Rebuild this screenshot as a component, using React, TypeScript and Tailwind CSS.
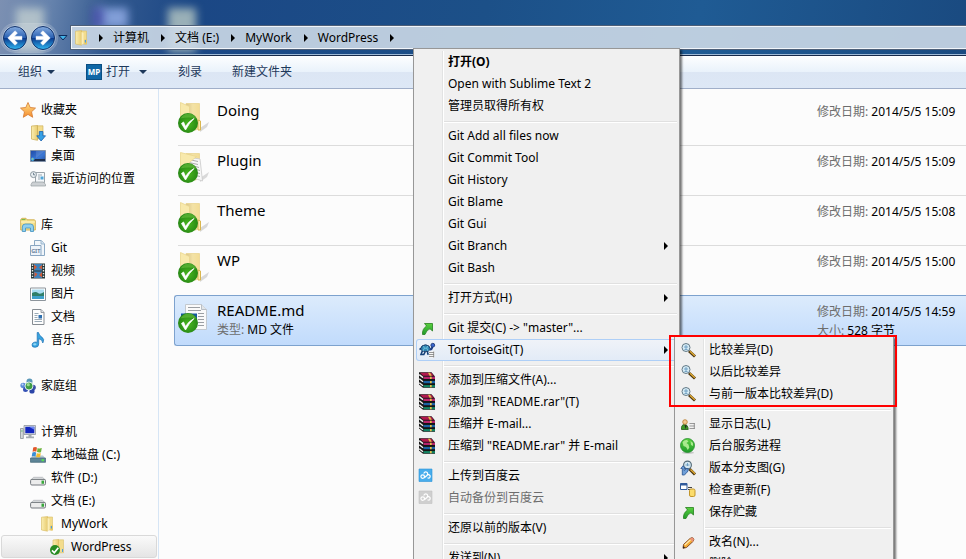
import React from "react";

type IconProps = { name: string };

const svg16 = "block size-4 shrink-0 overflow-visible";

function Icon({ name }: IconProps) {
  switch (name) {
    case "star":
      return (
        <svg className={svg16} viewBox="0 0 16 16">
          <path d="M8 .5l2.200 5 5.300.6-4 3.700 1.200 5.500L8 12.400l-4.700 2.900 1.200-5.500-4-3.700 5.300-.6z" fill="url(#gStar)" stroke="#d9813a" strokeWidth=".9" strokeLinejoin="round" />
        </svg>
      );
    case "folder":
      return (
        <svg className={svg16} viewBox="0 0 16 16">
          <path d="M7 1h5.500v13H7z" fill="#f3dc8c" stroke="#d9bf69" strokeWidth=".6" />
          <path d="M1.500 1.200L7.500.6v14.600l-6-1.200z" fill="url(#gFold)" stroke="#d6b95d" strokeWidth=".6" />
          <path d="M7.500 2v13l2-1.500V3z" fill="#fbeeb8" />
          <path d="M10.500 9.500h2.300v5h-2.300z" fill="#eac75f" />
          <path d="M11.400 10v2.500" stroke="#4b9ee0" strokeWidth="1.200" />
        </svg>
      );
    case "download":
      return (
        <svg className={svg16} viewBox="0 0 16 16">
          <path d="M7 .8h6v13H7z" fill="#f3dc8c" stroke="#c9ab52" strokeWidth=".6" />
          <path d="M1.500 1L7.500.5v14.800l-6-1.200z" fill="url(#gFold)" stroke="#c9ab52" strokeWidth=".7" />
          <path d="M9.300 6.500h3.600v4.300h2.600L11.100 16 6.700 10.800h2.600z" fill="#36a1e6" stroke="#1b62b0" strokeWidth=".8" />
        </svg>
      );
    case "desktop":
      return (
        <svg className={svg16} viewBox="0 0 16 16">
          <path d="M.5 2.500h15v11H.5z" fill="url(#gDesk)" stroke="#8292a8" />
          <path d="M1 11h14v2H1z" fill="#1d2d4a" />
          <circle cx="2.600" cy="11.300" r="1.800" fill="#3fa8e6" />
          <path d="M2 10.500h1v1H2z" fill="#f4c83c" />
          <path d="M6 3h9L6 10z" fill="#fff" opacity=".12" />
        </svg>
      );
    case "recent":
      return (
        <svg className={svg16} viewBox="0 0 16 16">
          <path d="M5.500 1.500h9v10h-9z" fill="#f5f8fa" stroke="#9aa3a9" />
          <path d="M8 4h4M8 6h2M8 8h2" stroke="#9aa8b2" />
          <path d="M10.500 5.500h3v3h-3z" fill="#4fa5d8" />
          <path d="M2.500 11h11l2 2.500v1.500H1v-1.500z" fill="#cdd1d4" stroke="#979da1" strokeWidth=".7" />
          <circle cx="3.500" cy="3.600" r="3" fill="#e8eef1" stroke="#8b979f" />
          <path d="M3.500 1.800v2h1.700" stroke="#5a6f7d" fill="none" strokeWidth=".8" />
        </svg>
      );
    case "library":
      return (
        <svg className={svg16} viewBox="0 0 16 16">
          <path d="M.7 13V2.500L2 1.300h4l1 1.500h7.500l.8 1V13z" fill="#f6e28d" stroke="#cfad4c" strokeWidth=".9" />
          <path d="M1.500 2.600h4" stroke="#6fb549" />
          <path d="M1 5h14" stroke="#fff6c6" />
          <path d="M2.300 14.500V10q0-3 3-3h5.200q3 0 3 3v4.500h-3v-3.500h-5v3.500z" fill="#8fcfee" stroke="#4090bf" strokeWidth=".8" />
        </svg>
      );
    case "git":
      return (
        <svg className={svg16} viewBox="0 0 16 16">
          <path d="M4.500.5h6.800L14.500 4v11.500h-10z" fill="#f1f6fb" stroke="#8ba9c4" />
          <path d="M11 .7V4h3.400" fill="#d5e4f1" stroke="#8ba9c4" strokeWidth=".8" />
          <path d="M.5 5.500h10.500v10H.5z" fill="#eef4fa" stroke="#8aa6c2" />
          <text x="5.800" y="13" textAnchor="middle" fontSize="5.500" fontWeight="700" fill="#6b839e" fontFamily="Noto Sans, sans-serif">GIT</text>
        </svg>
      );
    case "video":
      return (
        <svg className={svg16} viewBox="0 0 16 16">
          <path d="M1 .5h14v15H1z" fill="#293838" />
          <path d="M4 1h8v6.500H4zM4 8.500h8V15H4z" fill="#3c83bd" />
          <path d="M4 1.500l3 2.500-3 3zM12 2L9 4.500l3 2zM4.500 9l3 2-3 3.500zM12 9l-3 3 3 2.500z" fill="#cf5b38" />
          <path d="M2.500 1.500v13M13.500 1.500v13" stroke="#e4ecec" strokeWidth="1.400" strokeDasharray="1.400 1.400" />
        </svg>
      );
    case "picture":
      return (
        <svg className={svg16} viewBox="0 0 16 16">
          <path d="M.5 2h15v12.500H.5z" fill="#fff" stroke="#8d959c" />
          <path d="M2 3.500h12V13H2z" fill="#a9dcf2" />
          <path d="M2 7q4-2 6 0t6-1v4H2z" fill="#2f7f6a" />
          <path d="M2 10h12v3H2z" fill="#3ea0cb" />
        </svg>
      );
    case "doc":
      return (
        <svg className={svg16} viewBox="0 0 16 16">
          <path d="M2.500.500H11L14 3.500v12H2.500z" fill="#fdfdfd" stroke="#868c92" />
          <path d="M11 .5v3h3" fill="#dfe4e8" stroke="#868c92" strokeWidth=".8" />
          <path d="M4.500 4.500h4M4.500 6.500h3M4.500 8.500h3M4.500 10.500h7.500M4.500 12.500h7.500" stroke="#8fa0ae" strokeWidth=".9" />
          <path d="M8.500 6h3.500v3.500H8.500z" fill="#2e6fae" />
        </svg>
      );
    case "music":
      return (
        <svg className={svg16} viewBox="0 0 16 16">
          <path d="M7.200.5h1.300q.5 3 3.300 4.500 3.200 2.200 1 6-.2-3.500-4.100-4.300V12q0 3.300-3.500 3.300T2 12.900t2.500-2.700q1.500-.4 2.700.2z" fill="#38a4df" stroke="#1c70b4" strokeWidth=".7" />
          <ellipse cx="4.800" cy="12.300" rx="1.700" ry="1.100" fill="#8fd6f5" />
        </svg>
      );
    case "homegroup":
      return (
        <svg className={svg16} viewBox="0 0 16 16">
          <circle cx="3.200" cy="7.500" r="2.800" fill="#5d8bd8" />
          <circle cx="9.500" cy="3.500" r="3" fill="#5b98b8" />
          <circle cx="13" cy="9.500" r="2.800" fill="#3c4fa5" />
          <circle cx="12" cy="13" r="2.600" fill="#2c46a8" />
          <circle cx="5.500" cy="11.500" r="2.500" fill="#3552b5" />
          <circle cx="9" cy="8" r="4" fill="#3f9d45" stroke="#e9f3f8" strokeWidth=".9" />
          <circle cx="8.300" cy="6.700" r="1.600" fill="#9ad98f" />
          <circle cx="2.600" cy="6.500" r="1" fill="#c3d9f7" />
        </svg>
      );
    case "computer":
      return (
        <svg className={svg16} viewBox="0 0 16 16">
          <path d="M.5 4.500h2.800v10H.5z" fill="#d3d8db" stroke="#899197" strokeWidth=".8" />
          <path d="M1.300 7h1.200" stroke="#35b54a" />
          <path d="M4 1.500h11.500v9H4z" fill="#d9dde2" stroke="#8f979e" strokeWidth=".8" />
          <path d="M5.300 2.800h9v6.400h-9z" fill="#1226c0" />
          <path d="M9 2.800h5.300v3z" fill="#6d86f0" />
          <path d="M8.500 10.500h3v2h2.500v1.700H6v-1.700h2.500z" fill="#a4abb1" />
        </svg>
      );
    case "drive-win":
      return (
        <svg className={svg16} viewBox="0 0 16 16">
          <path d="M.5 11.500L3 8.500h10l2.500 3z" fill="#b5c7d2" />
          <path d="M.5 11h15v4.300H.5z" fill="#5d8597" stroke="#426675" strokeWidth=".7" />
          <path d="M11.500 12.200h2.500v2h-2.500z" fill="#57df4f" />
          <path d="M3.200.6q2-1.200 3.800 0L6.300 4.800q-1.800-1-3.700 0z" fill="#e2582b" />
          <path d="M7.600 1q2 1 4.200.1L11 5.200q-2 .8-4 -.1z" fill="#6db33c" />
          <path d="M2.400 5.500q2-1 3.800 0L5.500 9.500q-2-.8-3.800 0z" fill="#3a8ed5" />
          <path d="M6.800 5.900q1.800 1 4 0l-.7 4q-2 .8-4 0z" fill="#f3bb2e" />
        </svg>
      );
    case "drive":
      return (
        <svg className={svg16} viewBox="0 0 16 16">
          <path d="M.8 10L3.500 7.300h9L15.300 10z" fill="#dfe1e3" stroke="#abafb3" strokeWidth=".7" />
          <rect x=".6" y="9.400" width="14.900" height="5.600" rx="1.300" fill="#ececec" stroke="#74797e" />
          <path d="M11.500 10.600H14v3.200h-2.500z" fill="#39a83b" />
        </svg>
      );
    case "folder-ok":
      return (
        <svg className={svg16} viewBox="0 0 16 16">
          <path d="M8 .8h5.500v13H8z" fill="#f3dc8c" stroke="#d9bf69" strokeWidth=".6" />
          <path d="M3 1L8.500.5V15L3 13.800z" fill="url(#gFold)" stroke="#d6b95d" strokeWidth=".6" />
          <path d="M12.500 10v3" stroke="#4b9ee0" />
          <circle cx="5" cy="11" r="5" fill="#278b22" />
          <path d="M2 11.300l2.300 2.500 4-5" stroke="#fff" strokeWidth="1.700" fill="none" />
        </svg>
      );
    case "arrow":
      return (
        <svg className={svg16} viewBox="0 0 16 16">
          <path d="M5.500 3.500H13.500V11L11 8.800Q7.800 9.500 6 14.500H3.500Q3 9 7.600 6z" fill="url(#gGreen)" stroke="#26801d" strokeWidth=".8" strokeLinejoin="round" />
        </svg>
      );
    case "turtle":
      return (
        <svg className={svg16} viewBox="0 0 16 16">
          <path d="M2.200 6.500L.5 7.500M3.500 8.500L2 12.500h2.800l1.500-3M8.500 9l.3 3h1.700" stroke="#16427a" strokeWidth="1.600" fill="none" />
          <path d="M1.500 7q.5-4 5-4.200 4.200.2 5 4.200-1.500 2.600-5 2.600T1.500 7z" fill="#2f86b4" stroke="#15305c" strokeWidth=".9" />
          <path d="M4.500 3.800l.8 2.400h2.500l.8-2.400M5.300 6.200L4 9M7.800 6.200L9 9" stroke="#7fd0e4" strokeWidth=".8" fill="none" />
          <path d="M11 7.500q2 .2 2.300-3" stroke="#1d3f86" strokeWidth="2" fill="none" />
          <circle cx="13.800" cy="3.200" r="1.900" fill="#3a66cf" stroke="#17316c" strokeWidth=".8" />
          <path d="M9.800 9.300h5.700v6.500H9.800z" fill="#f6f6f6" />
          <path d="M10 10.500h5M10 12.500h5M10 14.500h5M14.700 9.500v6" stroke="#7d7d7d" strokeWidth=".8" />
        </svg>
      );
    case "rar":
      return (
        <svg className={svg16} viewBox="0 0 16 16">
          <path d="M0 .2h12.500L16 4.500v11.300H4L0 12.500z" fill="#141414" />
          <path d="M1 .7h11.300l2.500 3H4z" fill="#b3184e" />
          <path d="M4.500 4.700H16V7H4.500z" fill="#b8246c" />
          <path d="M4.500 8.900H16v2.300H4.500z" fill="#1b62a4" />
          <path d="M4.500 13.100H16v2.100H4.500z" fill="#128463" />
          <path d="M.3 2.600l3.700 3M.3 6.700l3.700 3M.3 10.800l3.700 3" stroke="#f2f2f2" strokeWidth="1.400" />
          <path d="M9 .7h2l1.800 3h-2.200zM11 4.700h1.700V7H11zM11 8.900h1.700v2.300H11zM11 13.100h1.700v2.100H11z" fill="#e3c04a" />
        </svg>
      );
    case "cloud":
    case "cloud-off": {
      const off = name === "cloud-off";
      return (
        <svg className={svg16} viewBox="0 0 16 16">
          <path d="M0 1h13v12.500H0z" fill={off ? "#cfcfcf" : "#48adec"} stroke={off ? "#c2c2c2" : "#2b93d8"} strokeWidth=".6" />
          <circle cx="3.700" cy="8.600" r="1.800" fill="none" stroke="#fff" strokeWidth="1.200" />
          <path d="M4.700 5.500q1.200-2.200 3.200-1.200 1.600 1.400 0 3.200L5.300 9.800M8.500 9.800q1.700.8 2.500-.6t-.8-2.400q-1.200-.4-1.800.4" fill="none" stroke="#fff" strokeWidth="1.200" />
        </svg>
      );
    }
    case "lens":
      return (
        <svg className={svg16} viewBox="0 0 16 16">
          <path d="M9 9l6 5.500" stroke="#4a3510" strokeWidth="3" />
          <path d="M10 9.300l4.800 4.400" stroke="#e2ab32" strokeWidth="1.500" />
          <circle cx="6" cy="5.500" r="4" fill="#d6ecf6" stroke="#647a87" />
          <path d="M4 5h4M6 3v4M4.500 7.500h3" stroke="#5e93ba" strokeWidth=".8" />
        </svg>
      );
    case "log":
      return (
        <svg className={svg16} viewBox="0 0 16 16">
          <path d="M1.500 13.500q-.5-5 3-5t3.700 5z" fill="#3c9a28" stroke="#23591a" strokeWidth=".8" />
          <path d="M4.500 9l1.200 4 1-3.500z" fill="#222" />
          <circle cx="5" cy="6" r="2.300" fill="#f2c893" stroke="#b97c2c" strokeWidth=".8" />
          <path d="M9.500 7.500h5M9.500 10h5M9.500 12.500h5" stroke="#999" />
          <path d="M14.300 7v6" stroke="#777" strokeWidth=".8" />
        </svg>
      );
    case "globe":
      return (
        <svg className={svg16} viewBox="0 0 16 16">
          <ellipse cx="8" cy="14.700" rx="6" ry="1.300" fill="#aaa" opacity=".6" />
          <circle cx="7.500" cy="7.500" r="7" fill="url(#gGreen)" stroke="#238b2c" strokeWidth=".8" />
          <path d="M2.500 4q2-2.500 4.500-2l1.500 1.500L6.500 5l2 1.500.8 3-1.500 2.500-1.800-3-2.500-1zM10.500 3l2.500 2v3l-2-1z" fill="#a9ea8e" />
        </svg>
      );
    case "graph":
      return (
        <svg className={svg16} viewBox="0 0 16 16">
          <path d="M9.500 9l5.500 5.500" stroke="#4a3510" strokeWidth="3" />
          <path d="M10.500 9.500l4.500 4.300" stroke="#e2ab32" strokeWidth="1.500" />
          <circle cx="7.500" cy="5" r="3.900" fill="#d3e6f1" stroke="#526976" strokeWidth="1.100" />
          <path d="M5.500 5h4M7.500 3v3" stroke="#5e93ba" strokeWidth=".8" />
          <path d="M.8 8.500L3 5.800l2.500 2.700H4.200v2l2.300-1.800h1.800L8 11l-2 2.500-1.800 1.500H2.300V8.500z" fill="#6f9fd8" stroke="#27528f" strokeWidth=".8" />
        </svg>
      );
    case "update":
      return (
        <svg className={svg16} viewBox="0 0 16 16">
          <path d="M.5 1.500h6.500v6H.5z" fill="#fff" stroke="#315a9b" />
          <path d="M.5 1.500h6.500v2H.5z" fill="#315a9b" />
          <path d="M8 5.500h4M8 7.500h2" stroke="#444" />
          <rect x="9.500" y="7" width="5.500" height="7.500" rx="1.500" fill="#fbdc6b" stroke="#c2952a" />
        </svg>
      );
    case "pencil":
      return (
        <svg className={svg16} viewBox="0 0 16 16">
          <path d="M3.500 10.500l6.500-6q2-1.500 3.200-.4t0 3.200L6.500 13.500 3 14.300z" fill="#f3ab35" stroke="#7a3f1c" strokeWidth=".9" />
          <path d="M4.800 11l5.700-5.300" stroke="#ffe9ae" strokeWidth="1.300" />
          <path d="M10 4.500q2-1.500 3.200-.4t0 3.200l-1 .8z" fill="#eb937a" />
          <path d="M3 14.300l.4-2.200 1.600 1.600z" fill="#222" />
        </svg>
      );
    case "delete":
      return (
        <svg className={svg16} viewBox="0 0 16 16">
          <path d="M3 4l9 9M12 4l-9 9" stroke="#d33" strokeWidth="2.500" />
        </svg>
      );
    default:
      return <span className="block size-4 shrink-0" />;
  }
}

function Gradients() {
  return (
    <svg className="absolute size-0" aria-hidden="true">
      <defs>
        <linearGradient id="gStar" x1="0" y1="0" x2="0" y2="1">
          <stop offset="0" stopColor="#ffe48a" />
          <stop offset="1" stopColor="#f58a2c" />
        </linearGradient>
        <linearGradient id="gFold" x1="0" y1="0" x2="1" y2="0">
          <stop offset="0" stopColor="#fbeeb0" />
          <stop offset="1" stopColor="#e8cc72" />
        </linearGradient>
        <linearGradient id="gDesk" x1="0" y1="0" x2="1" y2="1">
          <stop offset="0" stopColor="#1d49a8" />
          <stop offset=".6" stopColor="#3c78d4" />
          <stop offset="1" stopColor="#234fa0" />
        </linearGradient>
        <linearGradient id="gGreen" x1="0" y1="0" x2="0" y2="1">
          <stop offset="0" stopColor="#5ad13f" />
          <stop offset="1" stopColor="#1f9a2a" />
        </linearGradient>
        <radialGradient id="gCheck" cx=".5" cy=".55" r=".6">
          <stop offset="0" stopColor="#4cb81f" />
          <stop offset="1" stopColor="#1f7f14" />
        </radialGradient>
        <linearGradient id="gNav" x1="0" y1="0" x2="0" y2="1">
          <stop offset="0" stopColor="#86acdf" />
          <stop offset=".48" stopColor="#2b62b4" />
          <stop offset=".52" stopColor="#0c3c90" />
          <stop offset="1" stopColor="#2fb8f2" />
        </linearGradient>
        <linearGradient id="gBig" x1="0" y1="0" x2="1" y2="0">
          <stop offset="0" stopColor="#d9c48a" />
          <stop offset=".5" stopColor="#f3e2a6" />
          <stop offset="1" stopColor="#f3dc94" />
        </linearGradient>
      </defs>
    </svg>
  );
}

function FileIcon({ kind }: { kind: string }) {
  return (
    <svg className="block size-8 shrink-0 overflow-visible" viewBox="0 0 32 32">
      {kind === "md" ? (
        <>
          <path d="M7.500 2.500h16l5 5v20h-21z" fill="#fafafa" stroke="#c3c9cf" />
          <path d="M23.500 2.500v5h5" fill="#e1e5e9" stroke="#b8bfc6" />
          <path d="M10 5.500h12M10 8.500h13M20 11.500h6M20 14.500h6M20 17.500h6M20 20.500h6M20 23.500h6" stroke="#9b9fa4" strokeWidth="1.200" />
          <path d="M3 11.500h16v12H3z" fill="#14599c" />
        </>
      ) : (
        <>
          <path d="M22 26l9-6-2 5-7 5z" fill="#999" opacity=".35" />
          <path d="M8 1.500h13.500V25L18 28H8z" fill="url(#gBig)" stroke="#ead692" strokeWidth=".8" />
          {kind === "docs" && (
            <>
              <path d="M9 5l13 2 2.500 22-9-3z" fill="#f7f7f7" stroke="#c9c9c9" strokeWidth=".8" />
              <path d="M11 7.500l9 2M11 10.500l9 2M14 13.500l7 2M18 17.500l4 1M18 20.500l4 1M18 23.500l4 1" stroke="#a4a4a4" strokeWidth=".9" />
            </>
          )}
          <path d={kind === "docs" ? "M2.500.5l16 4-7 6v19l-9-4z" : "M2.500.5l9 4v26l-9-4z"} fill="#f8e9ac" stroke="#ead58e" strokeWidth=".8" />
          {kind === "folder" && <path d="M20 18l2.500 1v9H20z" fill="#fbedb2" stroke="#d9b64f" />}
        </>
      )}
      <circle cx="10" cy="21" r="10" fill="url(#gCheck)" />
      <path d="M2.500 16.500q3-5 8-5t8 5q-8-2-16 0z" fill="#7fd04c" opacity=".45" />
      <path d="M3.500 21.500l4 6.500Q11 21 16 16.500q-5 2.500-8.500 8L5.500 20z" fill="#fff" stroke="#fff" strokeWidth=".8" />
    </svg>
  );
}

function NavButton({ label, flip }: { label: string; flip?: boolean }) {
  return (
    <button type="button" aria-label={label} className="block size-7">
      <svg className="size-7" viewBox="0 0 28 28">
        <circle cx="14" cy="14" r="12.500" fill="#d4e2f2" opacity=".75" />
        <circle cx="14" cy="14" r="11.500" fill="url(#gNav)" stroke="#12326b" />
        <path
          d={flip ? "M7 12.200h7.500l-3-3.200 2.500-2.300 7.300 7.300-7.300 7.300-2.500-2.300 3-3.200H7z" : "M21 12.200h-7.500l3-3.200L14 6.700 6.700 14l7.300 7.300 2.500-2.300-3-3.200H21z"}
          fill="#fff"
          stroke="#e8f0fa"
          strokeWidth=".4"
        />
      </svg>
    </button>
  );
}

function RightTri({ className }: { className: string }) {
  return (
    <svg className={className} viewBox="0 0 4 8">
      <path d="M0 0l4 4-4 4z" fill="currentColor" />
    </svg>
  );
}

function DownTri() {
  return (
    <svg className="h-1 w-2" viewBox="0 0 8 4">
      <path d="M0 0h8L4 4z" fill="#1e395b" />
    </svg>
  );
}

const crumbs = ["计算机", "文档 (E:)", "MyWork", "WordPress"];

function TitleBar() {
  return (
    <header className="relative h-14 shrink-0 overflow-hidden border-b border-[#16294a] bg-[linear-gradient(100deg,#7c90b2_0,#6683ad_50px,#33598f_110px,#1b4785_190px,#1c5088_50%,#1f5b94_72%,#1a4a80_100%)] shadow-[inset_0_-1px_0_#9db9d6]">
      <span className="absolute top-2 left-4 h-11 w-7 bg-[#cdd8d4]/70 blur-[4px]" />
      <span className="absolute top-2 left-24 h-5 w-8 bg-[#8ba6e0]/90 blur-[4px]" />
      <span className="absolute top-2 left-[92px] h-5 w-3 bg-[#3b3fa0]/70 blur-[4px]" />
      <span className="absolute top-2 left-[168px] h-11 w-7 bg-[#b9cbc4]/80 blur-[4px]" />
      <nav className="relative flex items-start pt-6" aria-label="地址">
        <div className="flex w-[71px] shrink-0 items-center pl-px">
          <div className="flex rounded-full bg-white/15 shadow-[0_0_0_1px_#ffffff30]">
            <NavButton label="后退" />
            <NavButton label="前进" flip />
          </div>
          <button type="button" aria-label="最近的位置" className="ml-px">
            <svg className="h-[6px] w-[10px]" viewBox="0 0 10 6">
              <path d="M1 .5h8L5 5z" fill="#43b2e8" stroke="#0d2c5c" />
            </svg>
          </button>
        </div>
        <ol className="mt-[2px] flex h-[23px] flex-1 items-center border border-r-0 border-[#f1f5fa] bg-[#ccd9e7]/90 pl-[2px] text-[12px] shadow-[0_0_0_1px_#4d5f78]">
          <li className="mr-[9px]"><Icon name="folder" /></li>
          {crumbs.map((c) => (
            <li key={c} className="flex items-center">
              <RightTri className="mr-[10px] h-2 w-1 text-black" />
              <button type="button" className="mr-3 leading-5 whitespace-nowrap">{c}</button>
            </li>
          ))}
          <li><RightTri className="h-2 w-1 text-black" /></li>
        </ol>
      </nav>
    </header>
  );
}

function Toolbar() {
  return (
    <div className="flex h-[33px] shrink-0 items-center border-b border-[#a0afc9] bg-[linear-gradient(#fdfeff,#e9f2fb_50%,#dce6f4_50%,#dde8f6)] pl-[18px] text-[12px] text-[#1e395b]">
      <button type="button" className="flex items-center gap-[5px]">组织 <DownTri /></button>
      <button type="button" className="ml-[31px] flex items-center gap-1">
        <span className="flex size-4 items-center justify-center bg-[#0f67a6] text-[8px] font-bold text-white ring-1 ring-[#0b4f83] ring-inset">MP</span>
        打开
      </button>
      <button type="button" aria-label="打开选项" className="ml-[9px] flex"><DownTri /></button>
      <button type="button" className="ml-[31px]">刻录</button>
      <button type="button" className="ml-[30px]">新建文件夹</button>
    </div>
  );
}

type TreeItem = { icon: string; text: string; level: 0 | 1 | 2 | 3; selected?: boolean };

const tree: TreeItem[][] = [
  [
    { icon: "star", text: "收藏夹", level: 0 },
    { icon: "download", text: "下载", level: 1 },
    { icon: "desktop", text: "桌面", level: 1 },
    { icon: "recent", text: "最近访问的位置", level: 1 },
  ],
  [
    { icon: "library", text: "库", level: 0 },
    { icon: "git", text: "Git", level: 1 },
    { icon: "video", text: "视频", level: 1 },
    { icon: "picture", text: "图片", level: 1 },
    { icon: "doc", text: "文档", level: 1 },
    { icon: "music", text: "音乐", level: 1 },
  ],
  [{ icon: "homegroup", text: "家庭组", level: 0 }],
  [
    { icon: "computer", text: "计算机", level: 0 },
    { icon: "drive-win", text: "本地磁盘 (C:)", level: 1 },
    { icon: "drive", text: "软件 (D:)", level: 1 },
    { icon: "drive", text: "文档 (E:)", level: 1 },
    { icon: "folder", text: "MyWork", level: 2 },
    { icon: "folder-ok", text: "WordPress", level: 3, selected: true },
  ],
];

const indent = ["pl-[18px]", "pl-[28px]", "pl-[38px]", "pl-[48px]"];

function Sidebar() {
  return (
    <aside className="flex w-[159px] shrink-0 flex-col gap-[23px] border-r border-[#d6e5f5] pt-[9px] pr-px pl-px">
      {tree.map((group) => (
        <ul key={group[0].text}>
          {group.map((it) => (
            <li key={it.text}>
              <button
                type="button"
                className={`flex h-[23px] w-full items-center gap-[5px] rounded-[3px] border text-left text-[12px] whitespace-nowrap ${indent[it.level]} ${
                  it.selected ? "border-[#d9d9d9] bg-linear-to-b from-[#fafafa] to-[#e5e5e5]" : "border-transparent"
                }`}
              >
                <Icon name={it.icon} />
                {it.text}
              </button>
            </li>
          ))}
        </ul>
      ))}
    </aside>
  );
}

type FileRow = { name: string; kind: string; date: string; type?: string; size?: string };

const files: FileRow[] = [
  { name: "Doing", kind: "folder", date: "2014/5/5 15:09" },
  { name: "Plugin", kind: "docs", date: "2014/5/5 15:09" },
  { name: "Theme", kind: "folder", date: "2014/5/5 15:08" },
  { name: "WP", kind: "folder", date: "2014/5/5 15:00" },
  { name: "README.md", kind: "md", date: "2014/5/5 14:59", type: "MD 文件", size: "528 字节" },
];

function FileList() {
  return (
    <ul className="min-w-0 flex-1 pt-[6px] pl-[15px]">
      {files.map((f, i) => {
        const selected = f.kind === "md";
        return (
          <li
            key={f.name}
            className={
              selected
                ? "h-[51px] rounded-l-[3px] border border-r-0 border-[#7da2ce] bg-linear-to-b from-[#dcebfc] to-[#c1dbfc] pl-[3px]"
                : `ml-1 h-[50px] border-t ${i === 0 ? "border-transparent" : "border-[#dcdcdc]"}`
            }
          >
            <div className="flex pt-1">
              <div className="pt-[2px]"><FileIcon kind={f.kind} /></div>
              <div className="ml-[7px] min-w-0 flex-1">
                <p className="text-[15px] leading-5">{f.name}</p>
                {f.type && <p className="text-[12px] leading-5"><span className="text-[#6d6d6d]">类型:</span> {f.type}</p>}
              </div>
              <div className="w-[149px] shrink-0 pt-[2px] text-[12px] leading-[19px] whitespace-nowrap">
                <p><span className="text-[#6d6d6d]">修改日期:</span> {f.date}</p>
                {f.size && <p><span className="text-[#6d6d6d]">大小:</span> {f.size}</p>}
              </div>
            </div>
          </li>
        );
      })}
    </ul>
  );
}

type MenuEntry = { text: string; icon?: string; sub?: boolean; bold?: boolean; off?: boolean; hot?: boolean };

const mainMenu: MenuEntry[][] = [
  [{ text: "打开(O)", bold: true }, { text: "Open with Sublime Text 2" }, { text: "管理员取得所有权" }],
  [
    { text: "Git Add all files now" },
    { text: "Git Commit Tool" },
    { text: "Git History" },
    { text: "Git Blame" },
    { text: "Git Gui" },
    { text: "Git Branch", sub: true },
    { text: "Git Bash" },
  ],
  [{ text: "打开方式(H)", sub: true }],
  [
    { text: 'Git 提交(C) -> "master"...', icon: "arrow" },
    { text: "TortoiseGit(T)", icon: "turtle", sub: true, hot: true },
  ],
  [
    { text: "添加到压缩文件(A)...", icon: "rar" },
    { text: '添加到 "README.rar"(T)', icon: "rar" },
    { text: "压缩并 E-mail...", icon: "rar" },
    { text: '压缩到 "README.rar" 并 E-mail', icon: "rar" },
  ],
  [
    { text: "上传到百度云", icon: "cloud" },
    { text: "自动备份到百度云", icon: "cloud-off", off: true },
  ],
  [{ text: "还原以前的版本(V)" }],
  [{ text: "发送到(N)", sub: true }],
];

const gitMenu: MenuEntry[][] = [
  [
    { text: "比较差异(D)", icon: "lens" },
    { text: "以后比较差异", icon: "lens" },
    { text: "与前一版本比较差异(D)", icon: "lens" },
  ],
  [
    { text: "显示日志(L)", icon: "log" },
    { text: "后台服务进程", icon: "globe" },
    { text: "版本分支图(G)", icon: "graph" },
    { text: "检查更新(F)", icon: "update" },
    { text: "保存贮藏", icon: "arrow" },
  ],
  [{ text: "改名(N)...", icon: "pencil" }, { text: "删除", icon: "delete" }],
];

function Menu({ groups, label, className }: { groups: MenuEntry[][]; label: string; className: string }) {
  return (
    <div
      role="menu"
      aria-label={label}
      className={`border border-[#979797] bg-[#f0f0f0] p-[2px] text-[12px] shadow-[2px_2px_2px_#00000088] ${className}`}
    >
      {groups.map((g, i) => (
        <React.Fragment key={g[0].text}>
          {i > 0 && (
            <div role="separator" className="flex h-2">
              <span className="w-[27px] border-r border-[#e2e3e3] shadow-[1px_0_0_#fff]" />
              <span className="ml-px h-[5px] flex-1 border-b border-[#e0e0e0] shadow-[0_1px_0_#fff]" />
            </div>
          )}
          {g.map((m) => (
            <button
              key={m.text}
              type="button"
              role="menuitem"
              disabled={m.off}
              className={`flex h-[22px] w-full items-center text-left whitespace-nowrap ${m.bold ? "font-bold" : ""} ${m.off ? "text-[#6d6d6d]" : ""} ${
                m.hot ? "rounded-[3px] bg-linear-to-b from-[#f0f3f8] to-[#e2ebf7] shadow-[inset_0_0_0_1px_#aecff7]" : ""
              }`}
            >
              <span
                className={`flex h-full w-[27px] shrink-0 items-center border-r pl-[3px] ${
                  m.hot ? "border-transparent" : "border-[#e2e3e3] shadow-[1px_0_0_#fff]"
                }`}
              >
                <Icon name={m.icon ?? ""} />
              </span>
              <span className="flex-1 pl-[5px]">{m.text}</span>
              {m.sub && <RightTri className="mr-[9px] h-2 w-1 text-black" />}
            </button>
          ))}
        </React.Fragment>
      ))}
    </div>
  );
}

export default function App() {
  return (
    <main className="relative flex h-screen flex-col overflow-hidden bg-[#fcfcfc] font-['Noto_Sans','Noto_Sans_CJK_SC',sans-serif] text-black">
      <Gradients />
      <TitleBar />
      <Toolbar />
      <div className="flex min-h-0 flex-1">
        <Sidebar />
        <FileList />
      </div>
      <Menu groups={mainMenu} label="README.md" className="absolute top-12 left-[413px] w-[267px]" />
      <Menu groups={gitMenu} label="TortoiseGit" className="absolute top-[336px] left-[674px] w-[220px]" />
      <div className="pointer-events-none absolute top-[335px] left-[669px] h-[72px] w-[228px] border-2 border-[#ff0000]" />
    </main>
  );
}
